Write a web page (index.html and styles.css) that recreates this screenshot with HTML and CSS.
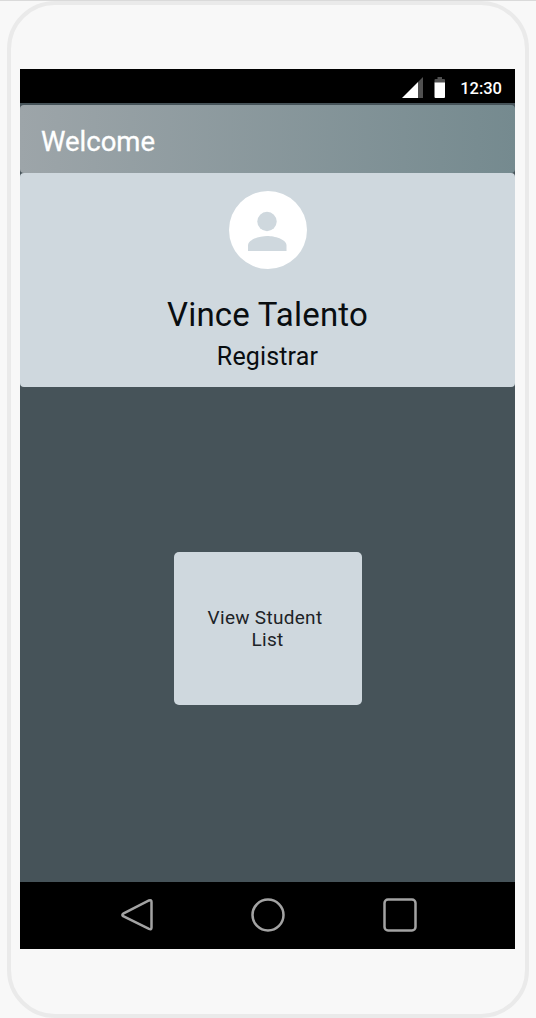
FILE: index.html
```html
<!DOCTYPE html>
<html lang="en">
<head>
<meta charset="utf-8">
<title>Welcome</title>
<link rel="stylesheet" href="styles.css">
</head>
<body>
<main class="phone">
  <div class="screen">
    <div class="status-bar">
      <svg class="signal" width="22" height="22" viewBox="0 0 22 22"><path d="M21 0V21H16V5Z" fill="#505050"/><path d="M0 21L16 5V21Z" fill="#fff"/></svg>
      <svg class="battery" width="12" height="22" viewBox="0 0 12 22"><path d="M0.500 6V3Q0.500 2 1.500 2H3.500V0H8V2H10Q11 2 11 3V6Z" fill="#505050"/><path d="M0.500 5.500H11V20Q11 21 10 21H1.500Q0.500 21 0.500 20Z" fill="#fff"/></svg>
      <span class="clock">12:30</span>
    </div>
    <header class="app-bar"><h1 class="title">Welcome</h1></header>
    <section class="profile">
      <svg class="avatar" width="78" height="78" viewBox="0 0 78 78"><circle cx="39" cy="39" r="39" fill="#fff"/><circle cx="38" cy="30.500" r="9.700" fill="#cfd8de"/><path d="M19 60V54.500C19 48 31.500 45 38.300 45S57.500 48 57.500 54.500V60Z" fill="#cfd8de"/></svg>
      <h2 class="name">Vince Talento</h2>
      <p class="role">Registrar</p>
    </section>
    <div class="content">
      <button class="tile">View Student&nbsp;<br>List</button>
    </div>
    <nav class="nav-bar">
      <svg width="34" height="36" viewBox="0 0 34 36"><path d="M4.200 16.700L30 3.500Q32.500 2.500 32.500 5V30.500Q32.500 33 30 31.900L4.200 19.200Q2.500 18 4.200 16.700Z"/></svg>
      <svg width="34" height="36" viewBox="0 0 34 36"><circle cx="17" cy="18" r="15.500"/></svg>
      <svg width="34" height="36" viewBox="0 0 34 36"><rect x="1.500" y="2.500" width="31" height="31" rx="3.500"/></svg>
    </nav>
  </div>
</main>
</body>
</html>
```
FILE: styles.css
```css
* { box-sizing: border-box; }
body {
  margin: 0;
  height: 1018px;
  overflow: hidden;
  padding: 0 7px;
  border-top: 1px solid #dadada;
  background: #f8f8f8;
  font-family: Roboto, "Liberation Sans", sans-serif;
}
.phone {
  height: 1017px;
  padding: 64px 10px 0 9px;
  border: 4px solid #eaeaea;
  border-radius: 48px;
  background: #f8f8f8;
}
.screen {
  display: flex;
  flex-direction: column;
  width: 495px;
  height: 880px;
  background: #465359;
}
.status-bar {
  display: flex;
  align-items: center;
  justify-content: flex-end;
  height: 34px;
  padding: 3px 13px 0 0;
  background: #000;
  color: #fff;
}
.signal { margin-right: 10px; }
.battery { margin-right: 14px; }
.clock {
  padding-top: 2px;
  font-size: 16.5px;
  font-weight: 500;
  line-height: 22px;
}
.app-bar {
  display: flex;
  align-items: center;
  height: 68px;
  margin-top: 2px;
  padding: 5px 0 0 21px;
  border-radius: 4px;
  background: linear-gradient(90deg, #9da5a9, #758a8f);
  color: #fff;
}
.title {
  margin: 0;
  font-size: 27.5px;
  font-weight: 400;
  line-height: 36px;
  -webkit-text-stroke: 0.3px #fff;
}
.profile {
  display: flex;
  flex-direction: column;
  align-items: center;
  height: 214px;
  padding-top: 18px;
  border-radius: 4px;
  background: #cfd8de;
  color: #090d10;
}
.name {
  margin: 26px 0 0;
  font-size: 33px;
  font-weight: 400;
  line-height: 40px;
  letter-spacing: 0.2px;
}
.role {
  margin: 7px 0 0;
  font-size: 25px;
  line-height: 30px;
  letter-spacing: 0.15px;
}
.content {
  display: flex;
  flex: 1;
  justify-content: center;
  padding-top: 165px;
}
.tile {
  width: 188px;
  height: 153px;
  padding: 0;
  border: 0;
  border-radius: 5px;
  background: #cfd8de;
  color: #1d2327;
  font: 400 19px/22px Roboto, "Liberation Sans", sans-serif;
  letter-spacing: 0.3px;
}
.nav-bar {
  display: flex;
  justify-content: center;
  align-items: center;
  gap: 98px;
  height: 67px;
  padding-bottom: 1px;
  background: #000;
}
.nav-bar svg {
  fill: none;
  stroke: #a3a3a3;
  stroke-width: 2.500;
}
```
